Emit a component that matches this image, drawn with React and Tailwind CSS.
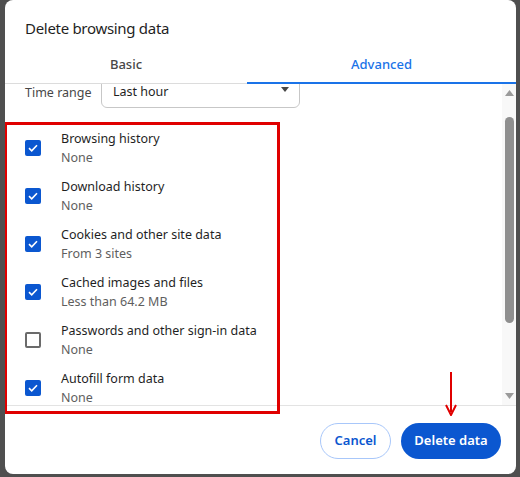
import React from 'react';

const items = [
  { label: 'Browsing history', detail: 'None', checked: true },
  { label: 'Download history', detail: 'None', checked: true },
  { label: 'Cookies and other site data', detail: 'From 3 sites', checked: true },
  { label: 'Cached images and files', detail: 'Less than 64.2 MB', checked: true },
  { label: 'Passwords and other sign-in data', detail: 'None', checked: false },
  { label: 'Autofill form data', detail: 'None', checked: true },
];

const Checkbox = ({ checked }) =>
  checked ? (
    <div className="w-[16px] h-[16px] rounded-[2px] bg-[#0b57d0] flex items-center justify-center">
      <svg width="10" height="8" viewBox="0 0 10 8" fill="none">
        <path d="M1 4.2 L3.7 6.8 L9 1.2" stroke="white" strokeWidth="1.6" />
      </svg>
    </div>
  ) : (
    <div className="w-[16px] h-[16px] rounded-[2px] border-2 border-[#6b6b6b] bg-white" />
  );

const DataRow = ({ label, detail, checked }) => (
  <div className="h-[48px] flex items-center">
    <div className="w-[56px] pl-[20px] flex">
      <Checkbox checked={checked} />
    </div>
    <div className="flex flex-col text-[12.5px] leading-[19px]">
      <span className="text-[#1f1f1f]">{label}</span>
      <span className="text-[#5e5e5e]">{detail}</span>
    </div>
  </div>
);

const Arrow = ({ up }) => (
  <svg width="9" height="6" viewBox="0 0 9 6">
    <path d={up ? 'M0 6 L4.5 0 L9 6 Z' : 'M0 0 L4.5 6 L9 0 Z'} fill="#9a9a9a" />
  </svg>
);

export default function App() {
  return (
    <div
      className="w-[520px] h-[477px] bg-[#4f4f4f] pl-[5px] pr-[4px] pb-[3px] flex"
      style={{ fontFamily: '"Noto Sans", sans-serif' }}
    >
      <div className="relative flex-1 bg-white rounded-[8px] flex flex-col overflow-hidden">
        {/* header */}
        <div className="h-[50px] pl-[20px] pt-[17px] text-[15px] leading-[22px] tracking-[-0.3px] text-[#1f1f1f]">
          Delete browsing data
        </div>

        {/* tabs */}
        <div className="h-[34px] flex border-b border-[#dcdcdc] text-[13px] font-medium">
          <div className="w-[242px] flex items-center justify-center pb-[4px] text-[#474747]">Basic</div>
          <div className="flex-1 flex items-center justify-center pb-[3px] text-[#1a73e8] border-b-2 border-[#1a73e8] -mb-px">
            Advanced
          </div>
        </div>

        {/* scroll area, scrolled a little past the time range select */}
        <div className="h-[322px] flex border-b border-[#e3e3e3]">
          <div className="flex-1 overflow-hidden">
            <div className="flex items-start pl-[20px]">
              <span className="w-[76px] mt-[1px] text-[12.5px] leading-[16px] text-[#474747]">Time range</span>
              <div className="w-[199px] h-[36px] -mt-[12px] border border-[#c7c7c7] rounded-[6px] flex items-end justify-between pl-[11px] pr-[10px] pb-[7px]">
                <span className="text-[12.5px] leading-[16px] text-[#1f1f1f]">Last hour</span>
                <svg width="8" height="5" viewBox="0 0 8 5" className="mb-[8px]">
                  <path d="M0 0 L4 5 L8 0 Z" fill="#474747" />
                </svg>
              </div>
            </div>
            <div className="mt-[16px]">
              {items.map((it) => (
                <DataRow key={it.label} {...it} />
              ))}
            </div>
          </div>
          <div className="w-[14px] bg-[#f8f8f8] flex flex-col items-center py-[6px]">
            <Arrow up />
            <div className="w-[9px] h-[206px] mt-[21px] rounded-full bg-[#8f8f8f]" />
            <div className="flex-1" />
            <Arrow />
          </div>
        </div>

        {/* footer */}
        <div className="flex-1 flex justify-end items-start pt-[17px] pr-[15px] gap-[10px] text-[13px] font-semibold">
          <button className="w-[71px] h-[36px] rounded-full border border-[#a8c7fa] text-[#0b57d0]">Cancel</button>
          <button className="w-[100px] h-[36px] rounded-full bg-[#0b57d0] text-white">Delete data</button>
        </div>

        {/* annotation overlay */}
        <div className="absolute left-[-1px] top-[122px] w-[276px] h-[292px] border-[3px] border-[#e00000]" />
        <svg className="absolute left-[440px] top-[372px]" width="12" height="44" viewBox="0 0 12 44">
          <path d="M6 0 V40" stroke="#e00000" strokeWidth="2" />
          <path d="M1 33 L6 43 L11 33" stroke="#e00000" strokeWidth="2" fill="none" />
        </svg>
      </div>
    </div>
  );
}
